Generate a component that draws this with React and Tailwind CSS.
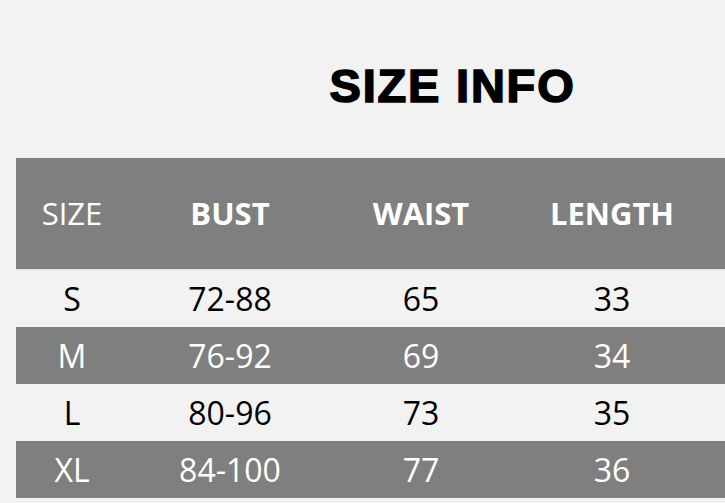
import React from 'react';

const rows = [
  { size: 'S', bust: '72-88', waist: '65', length: '33' },
  { size: 'M', bust: '76-92', waist: '69', length: '34' },
  { size: 'L', bust: '80-96', waist: '73', length: '35' },
  { size: 'XL', bust: '84-100', waist: '77', length: '36' },
];

const cols = 'grid grid-cols-[112px_204px_178px_204px_1fr]';

export default function App() {
  return (
    <div className="w-[725px] h-[503px] bg-[#f2f2f2] overflow-hidden font-['Open_Sans',sans-serif]">
      {/* Titulo */}
      <div className="h-[158px] flex items-start justify-center pl-[180px] pt-[61px]">
        <h1 className="font-['Liberation_Sans',sans-serif] font-bold text-[47px] leading-[50px] tracking-[1.8px] text-black [-webkit-text-stroke:1.6px_black]">
          SIZE INFO
        </h1>
      </div>

      {/* Tabla */}
      <div className="ml-4">
        <div className={`${cols} h-[112px] bg-[#7f7f7f] text-white text-[31px] items-center border-b border-[#e0e0e0]`}>
          <div className="text-center font-normal">SIZE</div>
          <div className="text-center font-bold">BUST</div>
          <div className="text-center font-bold">WAIST</div>
          <div className="text-center font-bold">LENGTH</div>
          <div />
        </div>
        {rows.map((r, i) => (
          <div
            key={r.size}
            className={`${cols} h-[57px] items-center text-[32px] ${
              i % 2 === 1 ? 'bg-[#7f7f7f] text-white' : 'bg-[#f2f2f2] text-black'
            }`}
          >
            <div className="text-center">{r.size}</div>
            <div className="text-center">{r.bust}</div>
            <div className="text-center">{r.waist}</div>
            <div className="text-center">{r.length}</div>
            <div />
          </div>
        ))}
      </div>
    </div>
  );
}
